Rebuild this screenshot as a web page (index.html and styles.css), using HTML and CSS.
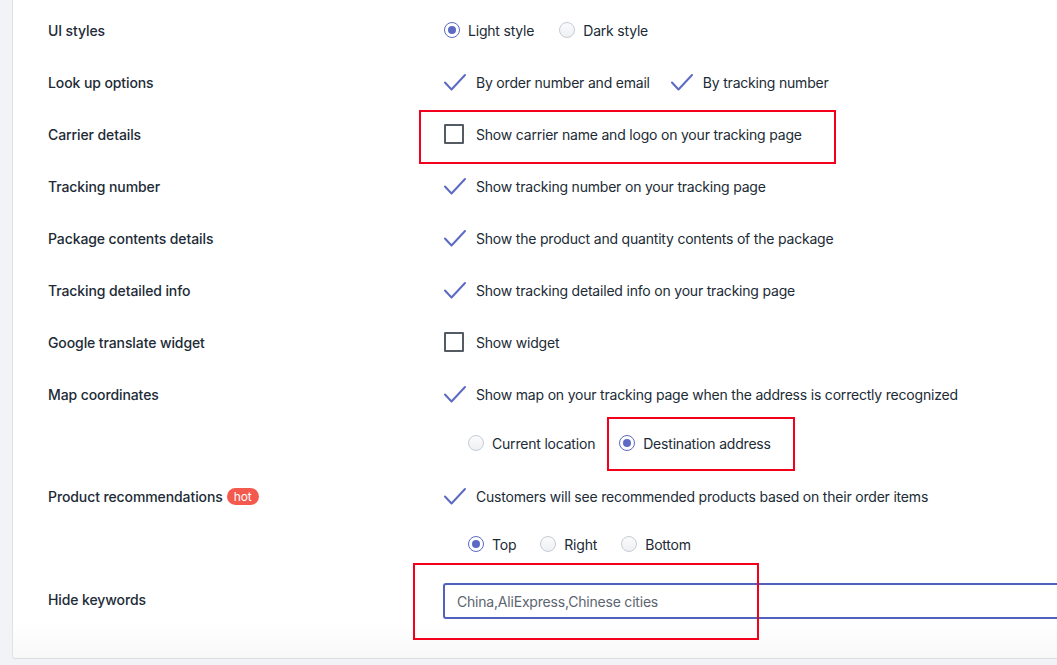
FILE: index.html
```html
<!DOCTYPE html>
<html lang="en">
<head>
<meta charset="utf-8">
<title>Tracking page settings</title>
<link rel="stylesheet" href="styles.css">
</head>
<body>
<div class="page">
  <section class="card">
    <div class="row">
      <div class="label">UI styles</div>
      <div class="controls">
        <label class="opt radio on"><span class="dot"></span>Light style</label>
        <label class="opt radio"><span class="dot"></span>Dark style</label>
      </div>
    </div>
    <div class="row">
      <div class="label">Look up options</div>
      <div class="controls gap20">
        <label class="opt check"><svg class="tick" viewBox="0 0 22 18"><path d="M1 9.5 L7.5 16.5 L21 2"/></svg>By order number and email</label>
        <label class="opt check"><svg class="tick" viewBox="0 0 22 18"><path d="M1 9.5 L7.5 16.5 L21 2"/></svg>By tracking number</label>
      </div>
    </div>
    <div class="row">
      <div class="label">Carrier details</div>
      <div class="controls">
        <label class="opt box"><span class="sq"></span>Show carrier name and logo on your tracking page</label>
      </div>
    </div>
    <div class="row">
      <div class="label">Tracking number</div>
      <div class="controls">
        <label class="opt check"><svg class="tick" viewBox="0 0 22 18"><path d="M1 9.5 L7.5 16.5 L21 2"/></svg>Show tracking number on your tracking page</label>
      </div>
    </div>
    <div class="row">
      <div class="label">Package contents details</div>
      <div class="controls">
        <label class="opt check"><svg class="tick" viewBox="0 0 22 18"><path d="M1 9.5 L7.5 16.5 L21 2"/></svg>Show the product and quantity contents of the package</label>
      </div>
    </div>
    <div class="row">
      <div class="label">Tracking detailed info</div>
      <div class="controls">
        <label class="opt check"><svg class="tick" viewBox="0 0 22 18"><path d="M1 9.5 L7.5 16.5 L21 2"/></svg>Show tracking detailed info on your tracking page</label>
      </div>
    </div>
    <div class="row">
      <div class="label">Google translate widget</div>
      <div class="controls">
        <label class="opt box"><span class="sq"></span>Show widget</label>
      </div>
    </div>
    <div class="row">
      <div class="label">Map coordinates</div>
      <div class="controls">
        <label class="opt check"><svg class="tick" viewBox="0 0 22 18"><path d="M1 9.5 L7.5 16.5 L21 2"/></svg>Show map on your tracking page when the address is correctly recognized</label>
      </div>
    </div>
    <div class="row sub sub-map">
      <div class="label"></div>
      <div class="controls indent">
        <label class="opt radio"><span class="dot"></span>Current location</label>
        <label class="opt radio on"><span class="dot"></span>Destination address</label>
      </div>
    </div>
    <div class="row">
      <div class="label">Product recommendations <span class="hot">hot</span></div>
      <div class="controls">
        <label class="opt check"><svg class="tick" viewBox="0 0 22 18"><path d="M1 9.5 L7.5 16.5 L21 2"/></svg>Customers will see recommended products based on their order items</label>
      </div>
    </div>
    <div class="row sub sub-pos">
      <div class="label"></div>
      <div class="controls indent">
        <label class="opt radio on"><span class="dot"></span>Top</label>
        <label class="opt radio"><span class="dot"></span>Right</label>
        <label class="opt radio"><span class="dot"></span>Bottom</label>
      </div>
    </div>
    <div class="row row-input">
      <div class="label label-input">Hide keywords</div>
      <div class="controls">
        <input class="text-input" type="text" value="China,AliExpress,Chinese cities">
      </div>
    </div>

    <div class="mark mark-carrier"></div>
    <div class="mark mark-dest"></div>
    <div class="mark mark-keywords"></div>
  </section>
</div>
</body>
</html>
```

FILE: styles.css
```css
html, body {
  margin: 0;
  padding: 0;
  overflow: hidden;
  background: #f1f3f6;
}
body {
  font-family: Inter, "Noto Sans", Roboto, Arial, sans-serif;
  font-size: 14px;
  color: #212b36;
}
.page {
  height: 665px;
  padding-left: 12px;
}
.card {
  position: relative;
  width: 1120px;
  height: 659px;
  box-sizing: border-box;
  background: linear-gradient(to bottom, #ffffff 0, #ffffff 620px, #f8f8f8 659px);
  border-left: 1px solid #dfe3e8;
  border-bottom: 1px solid #d9dce0;
  border-bottom-left-radius: 3px;
  padding-top: 4px;
  padding-left: 35px;
}
.row {
  display: flex;
  align-items: center;
  height: 52px;
}
.label {
  width: 395px;
  flex: none;
  display: flex;
  align-items: center;
  gap: 4px;
  font-weight: 500;
  letter-spacing: -0.1px;
}
.label-input { padding-bottom: 3px; }
.controls {
  display: flex;
  align-items: center;
  gap: 24px;
  flex: 1;
}
.controls.gap20 { gap: 20px; }
.controls.indent { padding-left: 24px; gap: 23px; }
.sub-map { height: 46px; margin-bottom: 4px; }
.sub-pos { height: 44px; }
.row-input { height: auto; padding-top: 17px; }

.opt {
  display: flex;
  align-items: center;
  color: #212b36;
  white-space: nowrap;
  letter-spacing: -0.2px;
}
.radio .dot {
  width: 14px;
  height: 14px;
  border: 1px solid #c4cdd5;
  border-radius: 50%;
  margin-left: 1px;
  margin-right: 8px;
  background: linear-gradient(#fbfbfc, #eef0f2);
  position: relative;
  flex: none;
}
.radio.on .dot {
  border-color: #5c6ac4;
  background: #fff;
}
.radio.on .dot::after {
  content: "";
  position: absolute;
  left: 3px;
  top: 3px;
  width: 8px;
  height: 8px;
  border-radius: 50%;
  background: #5c6ac4;
}
.tick {
  width: 22px;
  height: 18px;
  margin-left: 1px;
  margin-right: 10px;
  flex: none;
}
.tick path {
  fill: none;
  stroke: #5c6ac4;
  stroke-width: 2;
  stroke-linecap: round;
  stroke-linejoin: round;
}
.box .sq {
  width: 16px;
  height: 16px;
  border: 2px solid #555b62;
  border-radius: 1px;
  margin-left: 1px;
  margin-right: 12px;
  flex: none;
}
.hot {
  display: inline-block;
  background: #f4594e;
  color: #fff;
  font-size: 12px;
  font-weight: 400;
  line-height: 17px;
  padding: 0 7px;
  border-radius: 9px;
}
.text-input {
  width: 700px;
  height: 36px;
  box-sizing: border-box;
  border: 2px solid #5161c0;
  border-radius: 3px;
  padding: 0 12px;
  font-family: inherit;
  font-size: 14px;
  letter-spacing: -0.2px;
  color: #5c6570;
  outline: none;
  margin-left: 0;
}
.mark {
  position: absolute;
  border: 2px solid #f2001c;
  box-sizing: border-box;
  pointer-events: none;
}
.mark-carrier { left: 406px; top: 110px; width: 417px; height: 54px; }
.mark-dest { left: 594px; top: 417px; width: 188px; height: 54px; }
.mark-keywords { left: 400px; top: 563px; width: 346px; height: 77px; }
```
